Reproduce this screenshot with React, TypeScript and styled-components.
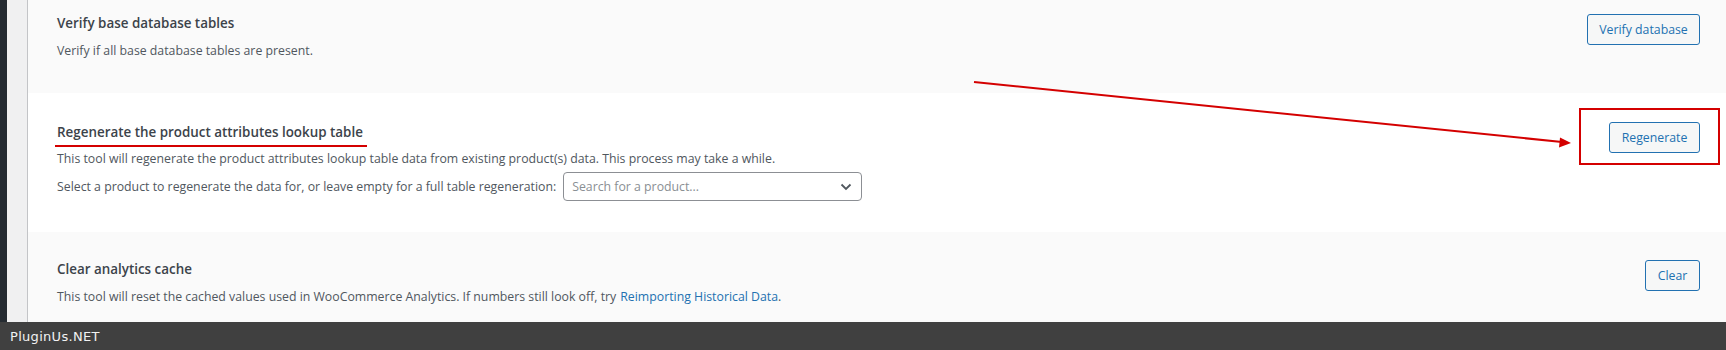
import React from "react";
import styled, { createGlobalStyle } from "styled-components";

const Global = createGlobalStyle`
  html, body { margin: 0; padding: 0; }
  body {
    width: 1726px;
    height: 350px;
    overflow: hidden;
    font-family: "Open Sans", "Noto Sans", sans-serif;
    background: #ffffff;
  }
`;

const Page = styled.div`
  position: relative;
  display: flex;
  flex-direction: column;
  width: 1726px;
  height: 350px;
`;

const Main = styled.div`
  display: flex;
  height: 322px;
  overflow: hidden;
`;

const SideBar = styled.div`
  width: 7px;
  background: #252b31;
  flex: none;
`;

const Gutter = styled.div`
  width: 20px;
  background: #f0f0f1;
  border-right: 1px solid #c3c4c7;
  flex: none;
`;

const Content = styled.div`
  flex: 1;
  display: flex;
  flex-direction: column;
`;

const Section = styled.div<{ $alt?: boolean; $h: number; $top: number }>`
  display: flex;
  align-items: flex-start;
  justify-content: space-between;
  height: ${(p) => p.$h}px;
  box-sizing: border-box;
  padding: ${(p) => p.$top}px 26px 0 29px;
  background: ${(p) => (p.$alt ? "#fafafa" : "#ffffff")};
  flex: none;
`;

const Info = styled.div`
  display: flex;
  flex-direction: column;
`;

const Title = styled.div`
  font-size: 13.4px;
  font-weight: 600;
  line-height: 20px;
  color: #3c434a;
`;

const Desc = styled.div<{ $mt: number }>`
  font-size: 12.3px;
  line-height: 20px;
  color: #50575e;
  margin-top: ${(p) => p.$mt}px;
  display: flex;
  align-items: center;
  gap: 7px;
`;

const Link = styled.a`
  color: #2271b1;
  text-decoration: none;
  margin-left: 4px;
`;

const Select = styled.div`
  width: 299px;
  height: 29px;
  box-sizing: border-box;
  border: 1px solid #8c8f94;
  border-radius: 4px;
  background: #fff;
  display: flex;
  align-items: center;
  justify-content: space-between;
  padding: 0 9px 0 8px;
  font-size: 12.3px;
  color: #8a8f94;
`;

const Button = styled.button<{ $w: number; $mt: number }>`
  width: ${(p) => p.$w}px;
  height: 31px;
  margin-top: ${(p) => p.$mt}px;
  box-sizing: border-box;
  border: 1px solid #2271b1;
  border-radius: 3px;
  background: #f6f7f7;
  color: #2271b1;
  font-family: "Open Sans", "Noto Sans", sans-serif;
  font-size: 12.3px;
  padding: 0;
  flex: none;
`;

const Footer = styled.div`
  height: 28px;
  background: #404040;
  color: #f2f2f2;
  font-family: "DejaVu Sans", sans-serif;
  font-size: 13px;
  letter-spacing: 0.3px;
  display: flex;
  align-items: center;
  padding-left: 10px;
`;

const Overlay = styled.svg`
  position: absolute;
  left: 0;
  top: 0;
  pointer-events: none;
`;

export default function App() {
  return (
    <Page>
      <Global />
      <Main>
        <SideBar />
        <Gutter />
        <Content>
          <Section $alt $h={93} $top={13}>
            <Info>
              <Title>Verify base database tables</Title>
              <Desc $mt={8}>Verify if all base database tables are present.</Desc>
            </Info>
            <Button $w={113} $mt={1}>Verify database</Button>
          </Section>
          <Section $h={139} $top={29}>
            <Info>
              <Title>Regenerate the product attributes lookup table</Title>
              <Desc $mt={7}>
                This tool will regenerate the product attributes lookup table data from existing product(s) data. This process may take a while.
              </Desc>
              <Desc $mt={3}>
                <span>Select a product to regenerate the data for, or leave empty for a full table regeneration:</span>
                <Select>
                  <span>Search for a product...</span>
                  <svg width="12" height="8" viewBox="0 0 12 8">
                    <path d="M1.5 1.5 L6 6 L10.5 1.5" fill="none" stroke="#50575e" strokeWidth="1.8" />
                  </svg>
                </Select>
              </Desc>
            </Info>
            <Button $w={91} $mt={0}>Regenerate</Button>
          </Section>
          <Section $alt $h={90} $top={27}>
            <Info>
              <Title>Clear analytics cache</Title>
              <Desc $mt={8}>
                <span>
                  This tool will reset the cached values used in WooCommerce Analytics. If numbers still look off, try
                  <Link href="#">Reimporting Historical Data</Link>.
                </span>
              </Desc>
            </Info>
            <Button $w={55} $mt={1}>Clear</Button>
          </Section>
        </Content>
      </Main>
      <Footer>PluginUs.NET</Footer>
      <Overlay width="1726" height="350" viewBox="0 0 1726 350">
        <line x1="55" y1="146" x2="367" y2="146" stroke="#d40000" strokeWidth="2" />
        <line x1="974" y1="82" x2="1562" y2="142" stroke="#d40000" strokeWidth="2" />
        <polygon points="1571,143 1560,137.5 1559,147.5" fill="#d40000" />
        <rect x="1580" y="109" width="139" height="55" fill="none" stroke="#d40000" strokeWidth="2" />
      </Overlay>
    </Page>
  );
}
